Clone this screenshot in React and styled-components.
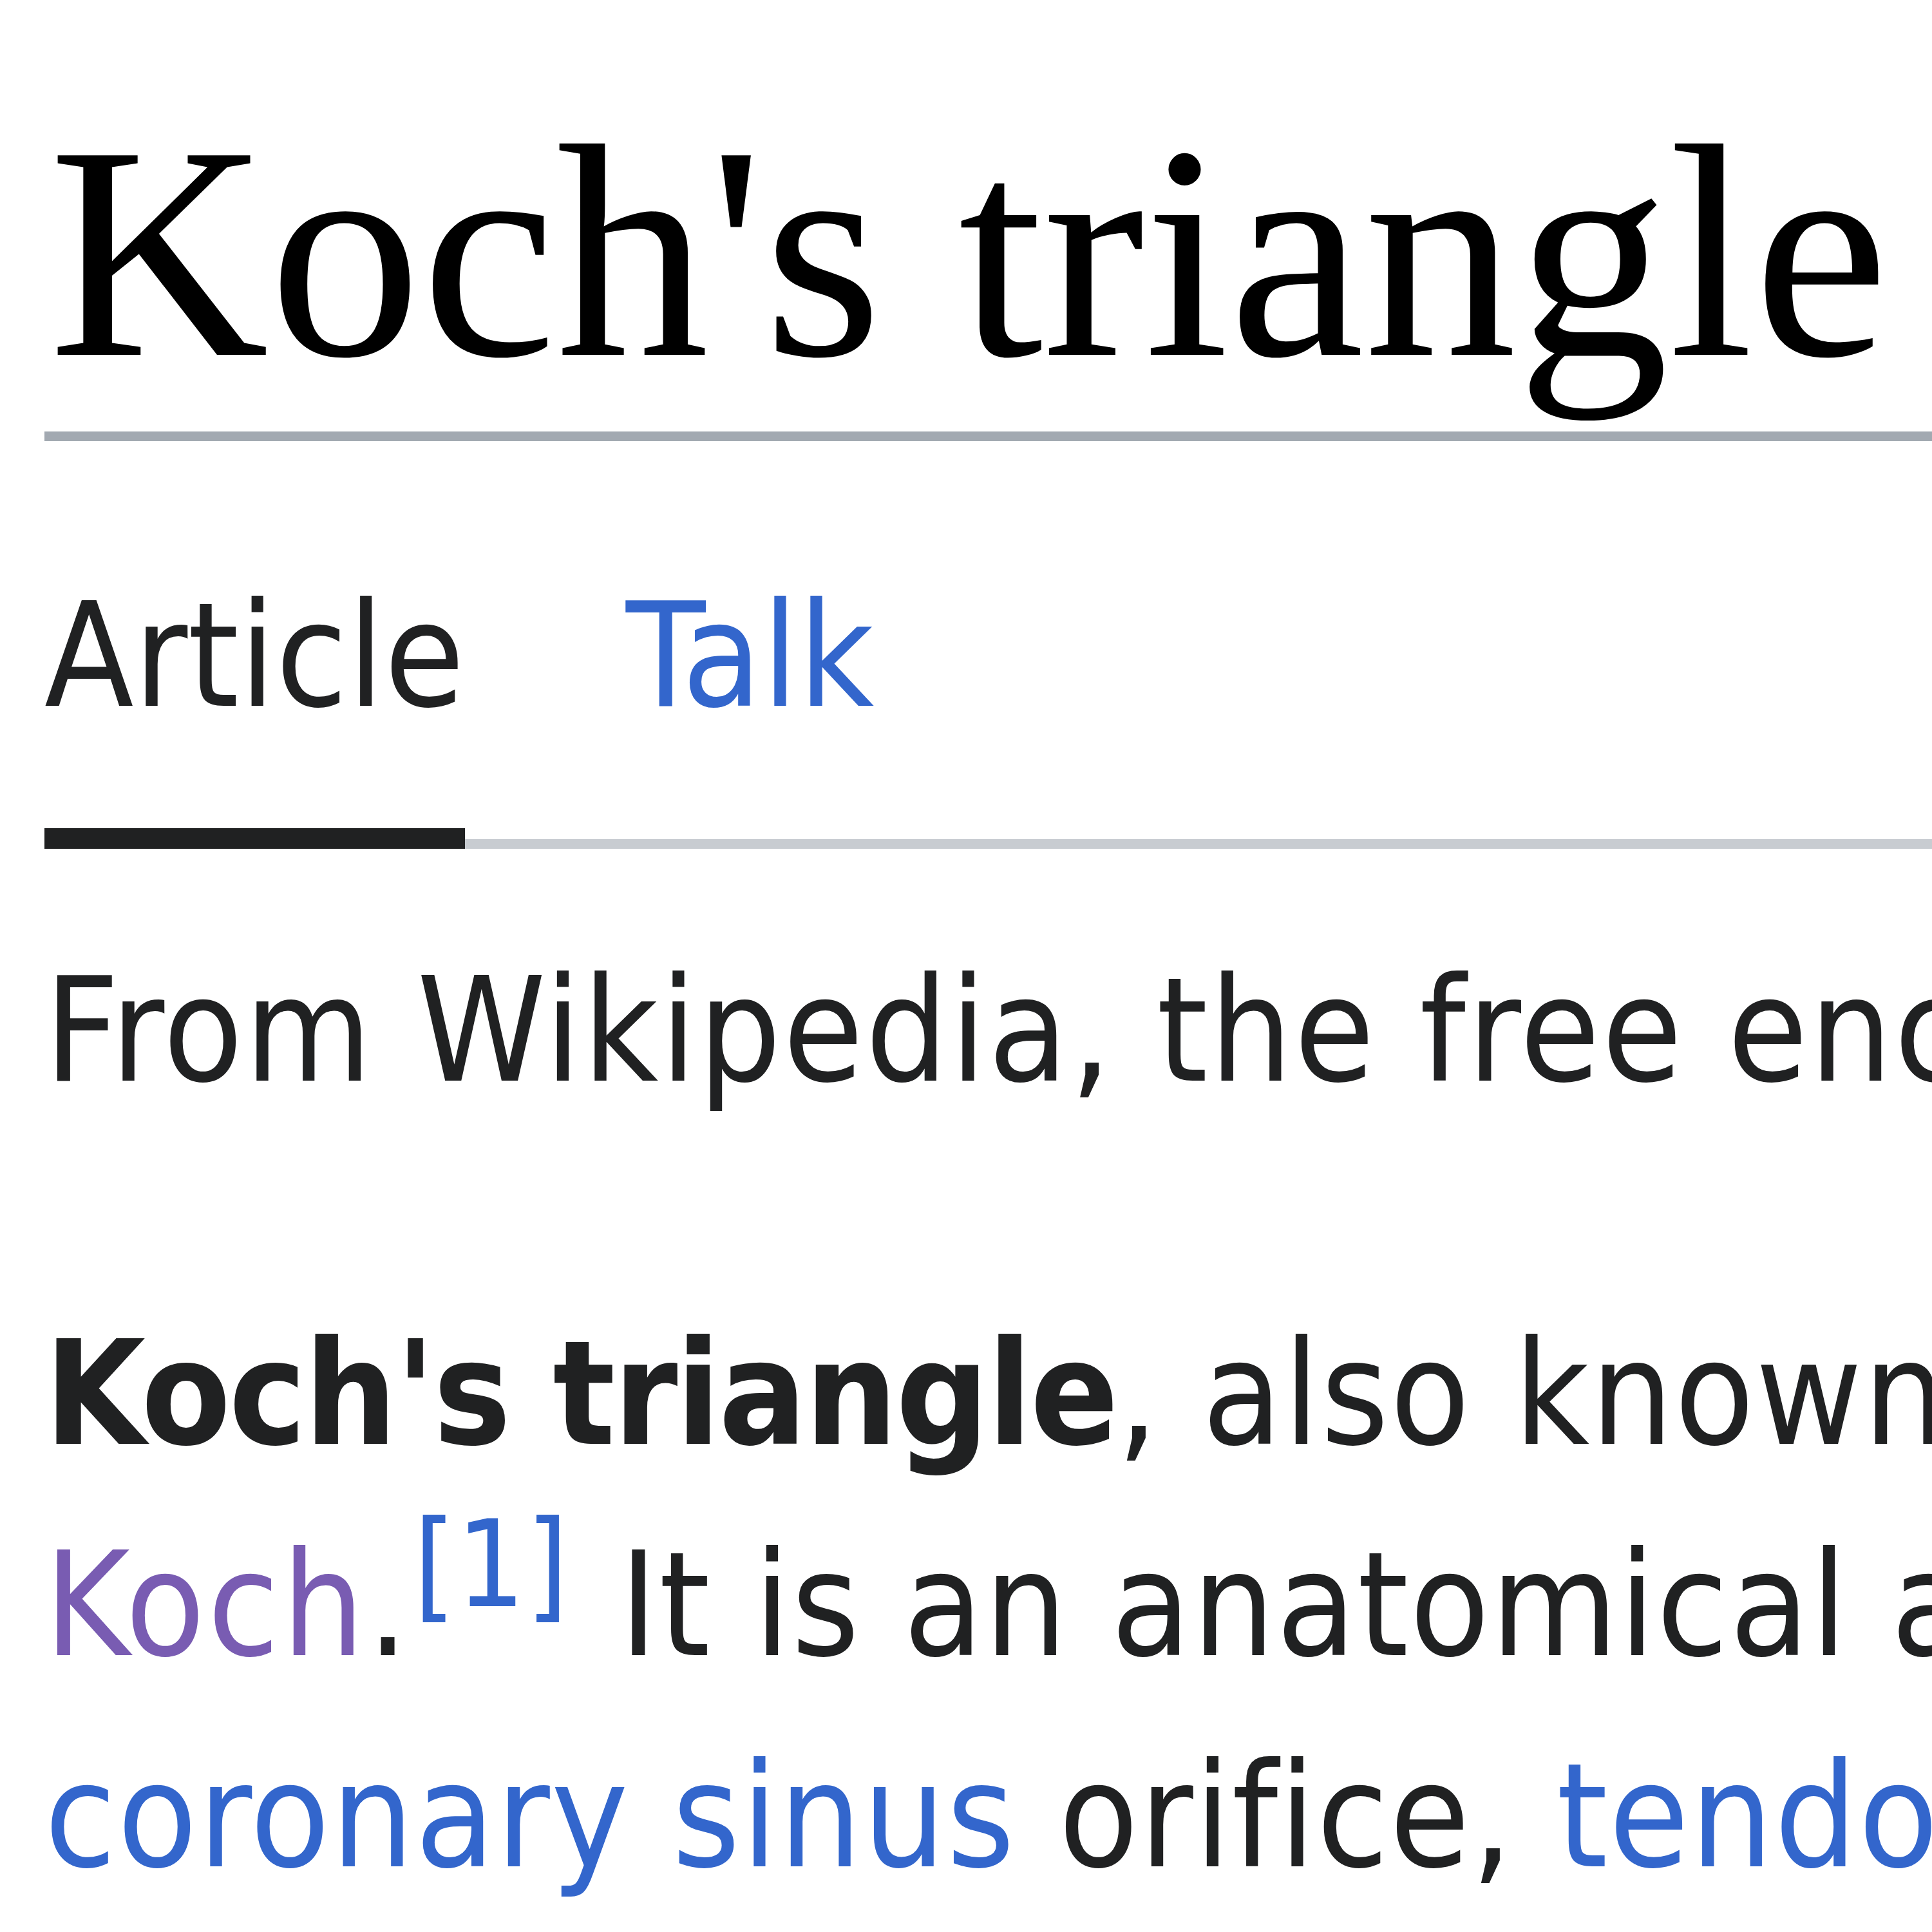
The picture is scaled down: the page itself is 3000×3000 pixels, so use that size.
import React from "react";
import styled, { createGlobalStyle } from "styled-components";

const GlobalStyle = createGlobalStyle`
  html, body {
    margin: 0;
    padding: 0;
    background: #ffffff;
  }
  body {
    width: 3000px;
    height: 3000px;
    overflow: hidden;
  }
`;

const SANS = `"DejaVu Sans Condensed", "DejaVu Sans", sans-serif`;

const Page = styled.main`
  width: 2931px;
  padding: 157px 0 0 69px;
  font-family: ${SANS};
  font-stretch: condensed;
  color: #202122;
`;

const Title = styled.h1`
  margin: 0;
  padding: 0 0 43px 7px;
  font-family: "Liberation Serif", "Times New Roman", serif;
  font-weight: 400;
  font-size: 473px;
  line-height: 470px;
  color: #000000;
  border-bottom: 15px solid #a2a9b1;
  white-space: nowrap;
`;

const TabBar = styled.nav`
  display: flex;
  margin-top: 169px;
  box-shadow: inset 0 -15px 0 #c8ccd1;
`;

const Tab = styled.a`
  display: block;
  padding-bottom: 136px;
  margin-left: ${(p) => (p.$first ? "0" : "250px")};
  font-size: 225px;
  line-height: 328px;
  letter-spacing: 0.5px;
  text-decoration: none;
  color: ${(p) => (p.$active ? "#202122" : "#3366cc")};
  box-shadow: ${(p) => (p.$active ? "inset 0 -32px 0 #202122" : "none")};
`;

const SiteSub = styled.div`
  margin-top: 118px;
  font-size: 225px;
  line-height: 328px;
  letter-spacing: 3px;
  color: #202122;
  white-space: nowrap;
`;

const Lead = styled.p`
  margin: 236px 0 0;
  font-size: 225px;
  line-height: 328px;
  letter-spacing: 2px;
  white-space: nowrap;
`;

const Strong = styled.b`
  font-weight: 700;
  letter-spacing: -2.8px;
`;

const Link = styled.a`
  text-decoration: none;
  letter-spacing: ${(p) => (p.$visited ? "4px" : "2px")};
  color: ${(p) => (p.$visited ? "#795cb2" : "#3366cc")};
`;

const Ref = styled.sup`
  margin: 0 12px 0 6px;
  font-size: 83%;
  line-height: 1;
  letter-spacing: 1px;
  vertical-align: super;
  color: #3366cc;
`;

export default function App() {
  return (
    <>
      <GlobalStyle />
      <Page>
        <Title>Koch's triangle</Title>
        <TabBar>
          <Tab $first $active>Article</Tab>
          <Tab>Talk</Tab>
        </TabBar>
        <SiteSub>From Wikipedia, the free encyclopedia</SiteSub>
        <Lead>
          <Strong>Koch's triangle</Strong>, also known as the triangle of Koch, is named after the German pathologist{" "}
          <Link $visited>Walter</Link>
          <br />
          <Link $visited>Koch</Link>.<Ref>[1]</Ref> It is an anatomical area located in the superficial paraseptal endocardium of the right atrium
          <br />
          <Link>coronary sinus</Link> orifice, <Link>tendon of Todaro</Link>, and the septal leaflet of the tricuspid valve.
        </Lead>
      </Page>
    </>
  );
}
